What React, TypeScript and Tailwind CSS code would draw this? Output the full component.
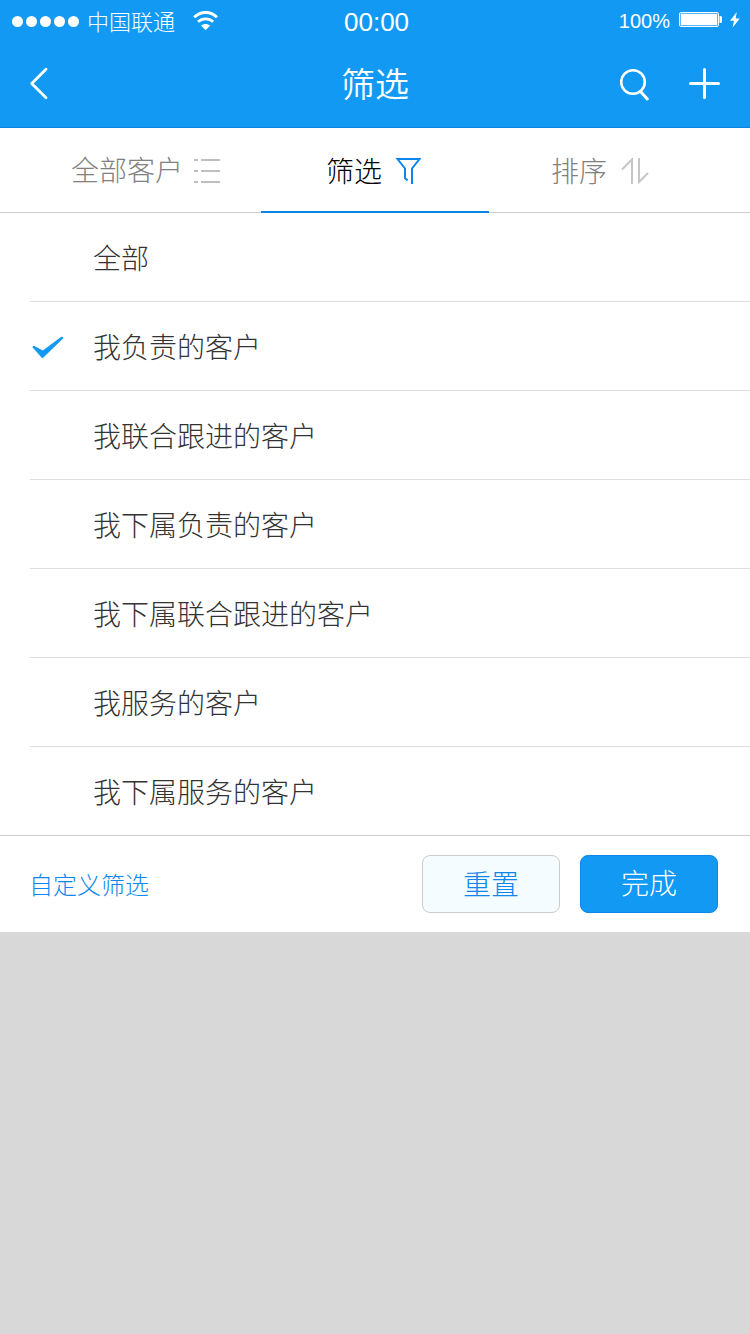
import { useState } from "react";

const FILTERS = [
  "全部",
  "我负责的客户",
  "我联合跟进的客户",
  "我下属负责的客户",
  "我下属联合跟进的客户",
  "我服务的客户",
  "我下属服务的客户",
];

const WifiIcon = () => (
  <svg width="26" height="20" viewBox="0 0 26 20" fill="none">
    <path d="M1.2 6.3C7.8 -0.2 17.4 -0.2 24 6.3" stroke="#fff" strokeWidth="3" />
    <path d="M5 10.8C9.3 6.8 15.9 6.8 20.2 10.8" stroke="#fff" strokeWidth="2.8" />
    <path d="M8 14.6C10.6 12.3 14.6 12.3 17.2 14.6L12.6 19.2Z" fill="#fff" />
  </svg>
);

const BatteryIcon = () => (
  <svg width="43" height="16" viewBox="0 0 43 16" fill="none">
    <rect x="0.5" y="0.5" width="39" height="14" rx="1.5" stroke="#fff" />
    <rect x="1.7" y="1.7" width="36.6" height="11.6" fill="#fff" />
    <path d="M40.5 4H41.5C42.3 4 43 4.7 43 5.5V9.5C43 10.3 42.3 11 41.5 11H40.5V4Z" fill="#fff" />
  </svg>
);

const BoltIcon = () => (
  <svg width="10" height="16" viewBox="0 0 10 16">
    <path d="M6.8 0L0 8.8H4L2.6 15.4L9.8 6.4H5.6L6.8 0Z" fill="#fff" />
  </svg>
);

const BackIcon = () => (
  <svg width="20" height="34" viewBox="0 0 20 34" fill="none">
    <path d="M17 2.2L2.7 16.5L17 30.8" stroke="#fff" strokeWidth="2.8" strokeLinecap="round" strokeLinejoin="round" />
  </svg>
);

const SearchIcon = () => (
  <svg width="30" height="34" viewBox="0 0 30 34" fill="none">
    <circle cx="13" cy="15" r="11.8" stroke="#fff" strokeWidth="2.6" />
    <path d="M20.5 24.5L27.3 32" stroke="#fff" strokeWidth="3" strokeLinecap="round" />
  </svg>
);

const PlusIcon = () => (
  <svg width="32" height="32" viewBox="0 0 32 32" fill="none">
    <path d="M15.5 1.5V29.5M1.5 15.5H29.5" stroke="#fff" strokeWidth="3" strokeLinecap="round" />
  </svg>
);

const ListIcon = () => (
  <svg width="28" height="28" viewBox="0 0 28 28" fill="none">
    <path d="M0 4H4M7 4H26M0 15H4M7 15H26M0 26H4M7 26H26" stroke="#bfbfbf" strokeWidth="2" />
  </svg>
);

const FunnelIcon = () => (
  <svg width="26" height="28" viewBox="0 0 26 28" fill="none">
    <path d="M12.5 23.5L10 21V11.5L2.5 2H24.5L17 11.5V27" stroke="#0a86ee" strokeWidth="2" />
  </svg>
);

const SortIcon = () => (
  <svg width="28" height="28" viewBox="0 0 28 28" fill="none">
    <path d="M1 12.5L11 2.5V27M18 1V25L27 16" stroke="#c6c6c6" strokeWidth="2" />
  </svg>
);

const CheckIcon = () => (
  <svg width="32" height="24" viewBox="0 0 32 24">
    <path d="M0.7 11.5C0.2 10.3 1.3 9.6 2.3 10.1L10.8 14.6L29 0.9C30.8 0 32 1.5 30.8 2.8L11.4 21.6C10.8 22.3 10.2 22.3 9.5 21.6L0.7 11.5Z" fill="#1199f3" />
  </svg>
);

const StatusBar = () => (
  <div className="flex h-10 items-start">
    <div className="flex w-[344px] pl-3">
      <div className="mt-4 flex gap-[3px]">
        {[0, 1, 2, 3, 4].map((i) => (
          <span key={i} className="h-[11px] w-[11px] rounded-full bg-white" />
        ))}
      </div>
      <span className="ml-2 pt-1 text-[22px] leading-8">中国联通</span>
      <span className="ml-[18px] mt-[11px]">
        <WifiIcon />
      </span>
    </div>
    <span className="pt-[6px] font-['Liberation_Sans',sans-serif] text-[26px] leading-8">00:00</span>
    <div className="ml-auto flex pr-[10px]">
      <span className="pt-[5px] font-['Liberation_Sans',sans-serif] text-[20px] leading-8">100%</span>
      <span className="ml-[9px] mt-3">
        <BatteryIcon />
      </span>
      <span className="ml-2 mt-3">
        <BoltIcon />
      </span>
    </div>
  </div>
);

const Header = () => (
  <header className="h-32 border-b border-[#0a84de] bg-[#1199f3] text-white">
    <StatusBar />
    <div className="grid h-[87px] grid-cols-3 items-center">
      <button type="button" className="pl-[29px]" aria-label="返回">
        <BackIcon />
      </button>
      <h1 className="pb-px text-center text-[34px] leading-[48px] font-[350]">筛选</h1>
      <div className="flex items-center justify-end gap-[39px] pr-[29px]">
        <button type="button" aria-label="搜索">
          <SearchIcon />
        </button>
        <button type="button" aria-label="新建">
          <PlusIcon />
        </button>
      </div>
    </div>
  </header>
);

const Tabs = () => (
  <nav className="flex h-[85px] border-b border-[#cccccc] text-[28px] text-[#808080]">
    <button type="button" className="flex w-[261px] items-center gap-[11px] pl-[71px]">
      <span className="pb-0.5">全部客户</span>
      <ListIcon />
    </button>
    <button type="button" className="-mb-px flex w-[228px] items-center gap-[13px] border-b-2 border-[#0d86e3] pl-[65px] text-black">
      <span>筛选</span>
      <span className="pt-0.5">
        <FunnelIcon />
      </span>
    </button>
    <button type="button" className="flex items-center gap-[14px] pl-[62px]">
      <span className="pb-px">排序</span>
      <span className="pt-0.5">
        <SortIcon />
      </span>
    </button>
  </nav>
);

export default function App() {
  const [selected, setSelected] = useState(1);

  return (
    <div className="flex min-h-[1334px] w-[750px] flex-col bg-[#d8d8d8] font-['Noto_Sans_CJK_SC',sans-serif] font-light">
      <Header />
      <div className="bg-white">
        <Tabs />
        <ul className="border-b border-[#cccccc] pl-[30px]">
          {FILTERS.map((label, i) => (
            <li
              key={label}
              className="flex h-[89px] cursor-pointer items-center border-b border-[#dedede] text-[28px] text-[#333333] last:h-[88px] last:border-b-0"
              onClick={() => setSelected(i)}
            >
              <span className="w-[63px] pl-0.5 pt-[3px]">{selected === i && <CheckIcon />}</span>
              <span className="pb-px">{label}</span>
            </li>
          ))}
        </ul>
        <footer className="flex h-24 items-center pl-[29px] pr-8 text-[28px]">
          <button type="button" className="text-2xl text-[#0d86ee]">
            自定义筛选
          </button>
          <button type="button" className="ml-auto h-[58px] w-[138px] rounded-lg border border-[#cccccc] bg-[#f5fcff] pb-0.5 text-[#0d86ee]">
            重置
          </button>
          <button type="button" className="ml-5 h-[58px] w-[138px] rounded-lg border border-[#0d86ee] bg-[#1199f3] pb-1 text-white">
            完成
          </button>
        </footer>
      </div>
    </div>
  );
}
